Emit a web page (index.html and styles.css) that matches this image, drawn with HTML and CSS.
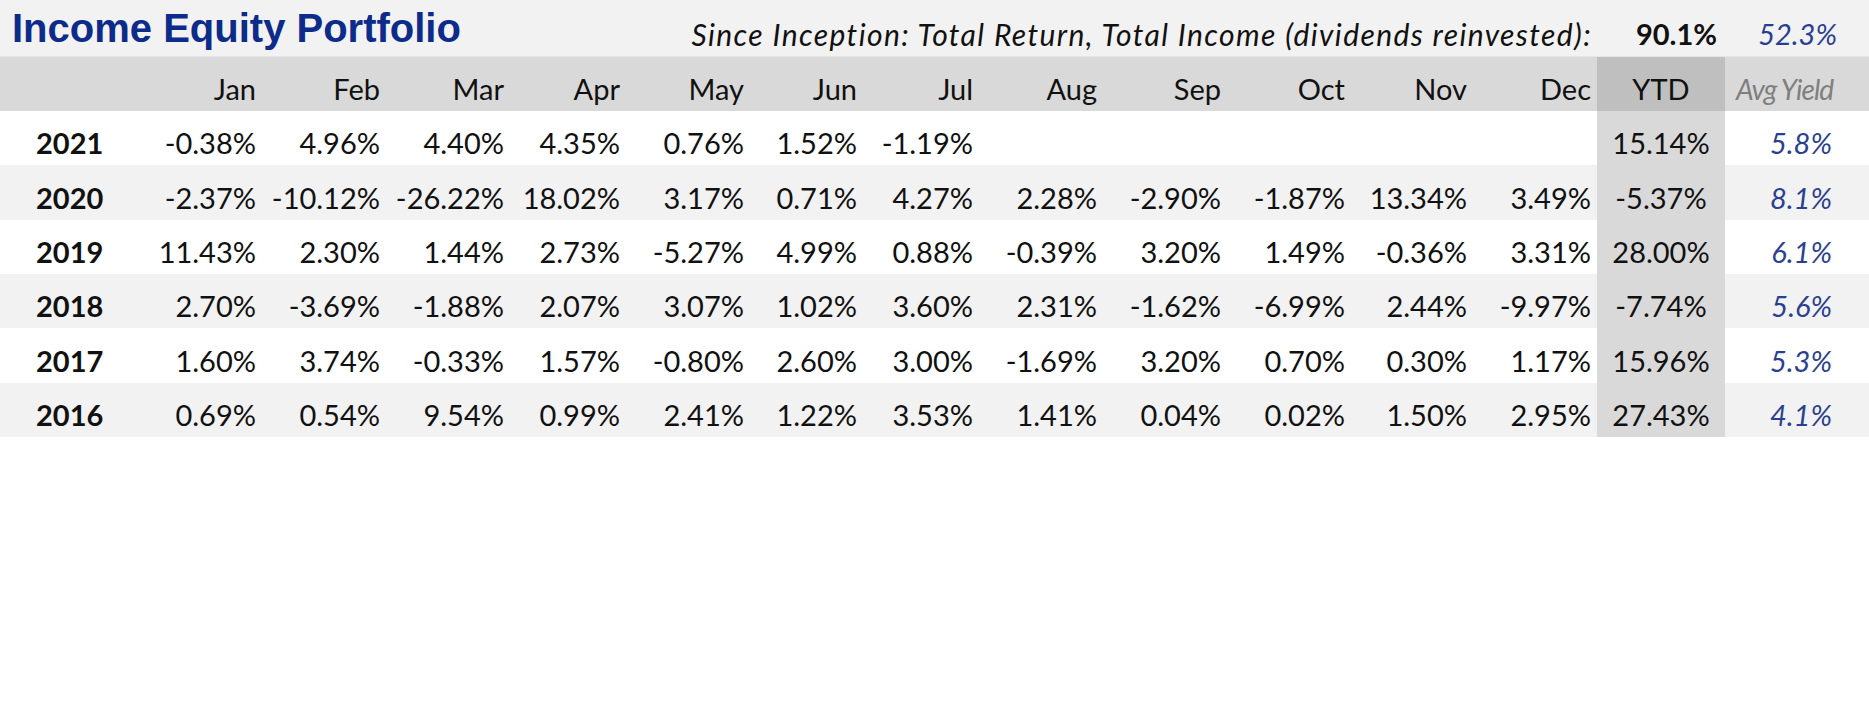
FILE: index.html
```html
<!DOCTYPE html>
<html lang="en">
<head>
<meta charset="utf-8">
<title>Income Equity Portfolio</title>
<link rel="stylesheet" href="styles.css">
</head>
<body>
<div class="sheet">
  <div class="titlebar">
    <div class="title">Income Equity Portfolio</div>
    <div class="since">Since Inception: Total Return, Total Income (dividends reinvested):</div>
    <div class="tot">90.1%</div>
    <div class="inc">52.3%</div>
  </div>
  <div class="grid">
    <div class="row head">
      <div class="c year"></div>
      <div class="c m">Jan</div><div class="c m">Feb</div><div class="c m">Mar</div><div class="c m">Apr</div>
      <div class="c m">May</div><div class="c m">Jun</div><div class="c m">Jul</div><div class="c m">Aug</div>
      <div class="c m">Sep</div><div class="c m">Oct</div><div class="c m">Nov</div><div class="c m">Dec</div>
      <div class="c ytd">YTD</div>
      <div class="c yld yld-head">Avg Yield</div>
    </div>
    <div class="row">
      <div class="c year">2021</div>
      <div class="c m">-0.38%</div><div class="c m">4.96%</div><div class="c m">4.40%</div><div class="c m">4.35%</div>
      <div class="c m">0.76%</div><div class="c m">1.52%</div><div class="c m">-1.19%</div><div class="c m"></div>
      <div class="c m"></div><div class="c m"></div><div class="c m"></div><div class="c m"></div>
      <div class="c ytd">15.14%</div>
      <div class="c yld">5.8%</div>
    </div>
    <div class="row alt">
      <div class="c year">2020</div>
      <div class="c m">-2.37%</div><div class="c m">-10.12%</div><div class="c m">-26.22%</div><div class="c m">18.02%</div>
      <div class="c m">3.17%</div><div class="c m">0.71%</div><div class="c m">4.27%</div><div class="c m">2.28%</div>
      <div class="c m">-2.90%</div><div class="c m">-1.87%</div><div class="c m">13.34%</div><div class="c m">3.49%</div>
      <div class="c ytd">-5.37%</div>
      <div class="c yld">8.1%</div>
    </div>
    <div class="row">
      <div class="c year">2019</div>
      <div class="c m">11.43%</div><div class="c m">2.30%</div><div class="c m">1.44%</div><div class="c m">2.73%</div>
      <div class="c m">-5.27%</div><div class="c m">4.99%</div><div class="c m">0.88%</div><div class="c m">-0.39%</div>
      <div class="c m">3.20%</div><div class="c m">1.49%</div><div class="c m">-0.36%</div><div class="c m">3.31%</div>
      <div class="c ytd">28.00%</div>
      <div class="c yld">6.1%</div>
    </div>
    <div class="row alt">
      <div class="c year">2018</div>
      <div class="c m">2.70%</div><div class="c m">-3.69%</div><div class="c m">-1.88%</div><div class="c m">2.07%</div>
      <div class="c m">3.07%</div><div class="c m">1.02%</div><div class="c m">3.60%</div><div class="c m">2.31%</div>
      <div class="c m">-1.62%</div><div class="c m">-6.99%</div><div class="c m">2.44%</div><div class="c m">-9.97%</div>
      <div class="c ytd">-7.74%</div>
      <div class="c yld">5.6%</div>
    </div>
    <div class="row">
      <div class="c year">2017</div>
      <div class="c m">1.60%</div><div class="c m">3.74%</div><div class="c m">-0.33%</div><div class="c m">1.57%</div>
      <div class="c m">-0.80%</div><div class="c m">2.60%</div><div class="c m">3.00%</div><div class="c m">-1.69%</div>
      <div class="c m">3.20%</div><div class="c m">0.70%</div><div class="c m">0.30%</div><div class="c m">1.17%</div>
      <div class="c ytd">15.96%</div>
      <div class="c yld">5.3%</div>
    </div>
    <div class="row alt">
      <div class="c year">2016</div>
      <div class="c m">0.69%</div><div class="c m">0.54%</div><div class="c m">9.54%</div><div class="c m">0.99%</div>
      <div class="c m">2.41%</div><div class="c m">1.22%</div><div class="c m">3.53%</div><div class="c m">1.41%</div>
      <div class="c m">0.04%</div><div class="c m">0.02%</div><div class="c m">1.50%</div><div class="c m">2.95%</div>
      <div class="c ytd">27.43%</div>
      <div class="c yld">4.1%</div>
    </div>
  </div>
</div>
</body>
</html>
```

FILE: styles.css
```css
html, body {
  margin: 0;
  padding: 0;
  background: #ffffff;
}

.sheet {
  width: 1869px;
  font-family: Lato, "Open Sans", "DejaVu Sans", sans-serif;
  color: #111111;
}

.titlebar {
  display: grid;
  grid-template-columns: 691px 906px 128px 144px;
  height: 57px;
  background: #f2f2f2;
  border-bottom: 1px solid #e4e4e4;
  box-sizing: border-box;
  align-items: end;
}

.title {
  font-family: "Liberation Sans", Arial, sans-serif;
  font-weight: bold;
  font-size: 40px;
  line-height: 40px;
  color: #0d2b8a;
  padding-left: 12px;
  padding-bottom: 8px;
  white-space: nowrap;
}

.since {
  font-style: italic;
  font-size: 30px;
  letter-spacing: 1.4px;
  line-height: 30px;
  text-align: right;
  padding-right: 5px;
  padding-bottom: 7px;
  white-space: nowrap;
}

.tot {
  font-weight: bold;
  font-size: 29px;
  line-height: 30px;
  text-align: right;
  padding-right: 8px;
  padding-bottom: 7px;
}

.inc {
  font-style: italic;
  font-size: 29px;
  line-height: 30px;
  color: #2a3f8f;
  text-align: right;
  padding-right: 32px;
  padding-bottom: 7px;
}

.grid {
  display: flex;
  flex-direction: column;
}

.row {
  display: grid;
  grid-template-columns: 138px 124px 124px 124px 116px 124px 113px 116px 124px 124px 124px 122px 124px 128px 144px;
  height: 54.33px;
  align-items: end;
  font-size: 29px;
}

.row.head {
  height: 54px;
  background: #d9d9d9;
}

.row.alt {
  background: #f2f2f2;
}

.c {
  height: 100%;
  box-sizing: border-box;
  display: flex;
  align-items: flex-end;
  padding-bottom: 7px;
  line-height: 30px;
  white-space: nowrap;
}

.year {
  font-weight: bold;
  padding-left: 36px;
}

.m {
  justify-content: flex-end;
  padding-right: 6px;
}

.ytd {
  justify-content: center;
  background: #d9d9d9;
}

.head .ytd {
  background: #bfbfbf;
}

.yld {
  justify-content: flex-end;
  padding-right: 37px;
  font-style: italic;
  color: #2a3f8f;
}

.yld-head {
  color: #7f7f7f;
  font-size: 28px;
  letter-spacing: -1px;
  padding-right: 36px;
}
```
